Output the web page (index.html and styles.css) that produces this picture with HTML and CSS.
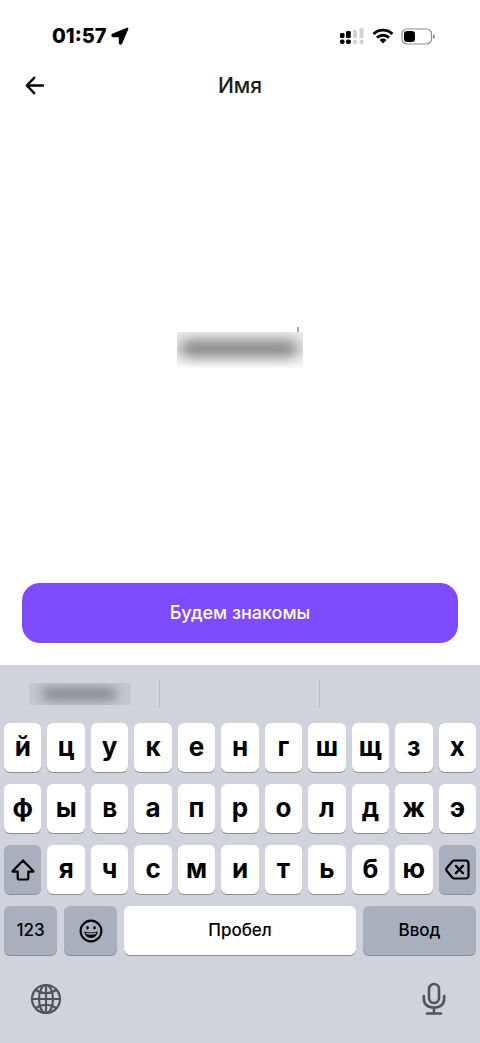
FILE: index.html
```html
<!DOCTYPE html>
<html lang="ru">
<head>
<meta charset="utf-8">
<meta name="viewport" content="width=device-width, initial-scale=1">
<title>Имя</title>
<link rel="stylesheet" href="styles.css">
</head>
<body>
<div class="screen">
  <div class="status">
    <div class="clock"><span>01:57</span>
      <svg width="18" height="18" viewBox="0 0 17 17" aria-hidden="true"><path d="M15.500 1.500 L1.500 7.300 Q.8 8.500 2 8.700 H7.300 Q8.300 8.700 8.300 9.700 V15 Q8.700 16.500 9.700 15.300 Z" fill="#000" stroke="#000" stroke-width="1.900" stroke-linejoin="round"/></svg>
    </div>
    <div class="indicators">
      <svg width="26" height="18" viewBox="0 0 26 18" aria-hidden="true">
        <g fill="#000"><rect x="1" y="6" width="4.500" height="5" rx="1.300"/><rect x="7" y="4" width="4.800" height="7" rx="1.300"/><rect x="1" y="12.500" width="4.500" height="4.500" rx="1.800"/><rect x="7" y="12.500" width="4.800" height="4.500" rx="1.800"/></g>
        <g fill="#d0d0d0"><rect x="14" y="3" width="4" height="8" rx="1.300"/><rect x="20.500" y="1" width="4" height="10" rx="1.300"/><rect x="14" y="12.500" width="4" height="4.500" rx="1.800"/><rect x="20.500" y="12.500" width="4" height="4.500" rx="1.800"/></g>
      </svg>
      <svg width="22" height="16" viewBox="0 0 22 16" aria-hidden="true"><g fill="none" stroke="#000" stroke-width="2.900"><path d="M1.500 6 A13.500 13.500 0 0 1 20.500 6"/><path d="M5 9.700 A8.500 8.500 0 0 1 17 9.700"/></g><path d="M7.500 12 Q11 9.200 14.500 12 L11 15.500Z"/></svg>
      <svg width="35" height="17" viewBox="0 0 35 17" aria-hidden="true"><rect x="1" y="1" width="29.500" height="15" rx="5" fill="none" stroke="#8c8c8c" stroke-width="1.200"/><rect x="3" y="3" width="11" height="11" rx="3.200"/><path d="M32 6 Q34 7 34 8.500 T32 11Z" fill="#8c8c8c"/></svg>
    </div>
  </div>

  <header class="header">
    <button class="back" type="button" aria-label="Назад">
      <svg width="20" height="20" viewBox="0 0 20 20" aria-hidden="true"><path d="M18 9.500 H2 M9.200 1.800 L1.800 9.500 L9.200 17.200" fill="none" stroke="#000" stroke-width="2.400" stroke-linecap="round" stroke-linejoin="round"/></svg>
    </button>
    <h1 class="title">Имя</h1>
  </header>

  <main class="content">
    <div class="name-field">
      <input class="name-input" type="text" aria-label="Имя">
      <span class="caret"></span>
      <span class="smudge"></span>
    </div>
  </main>

  <button class="submit" type="button">Будем знакомы</button>

  <section class="keyboard" aria-label="Клавиатура">
    <div class="suggestions">
      <button class="suggestion" type="button" aria-label="Подсказка 1"><span class="smudge smudge-small"></span></button>
      <button class="suggestion" type="button" aria-label="Подсказка 2"></button>
      <button class="suggestion" type="button" aria-label="Подсказка 3"></button>
    </div>
    <div class="rows">
      <div class="row letters">
        <button class="key">й</button><button class="key">ц</button><button class="key">у</button><button class="key">к</button><button class="key">е</button><button class="key">н</button><button class="key">г</button><button class="key">ш</button><button class="key">щ</button><button class="key">з</button><button class="key">х</button>
      </div>
      <div class="row letters">
        <button class="key">ф</button><button class="key">ы</button><button class="key">в</button><button class="key">а</button><button class="key">п</button><button class="key">р</button><button class="key">о</button><button class="key">л</button><button class="key">д</button><button class="key">ж</button><button class="key">э</button>
      </div>
      <div class="row letters">
        <button class="key dark" aria-label="Shift"><svg width="24" height="22" viewBox="0 0 24 22" aria-hidden="true"><path d="M12 1.500 L22.300 12 Q22.500 12.700 21.800 12.700 H17.300 V19 Q17.300 20.500 15.800 20.500 H8.200 Q6.700 20.500 6.700 19 V12.700 H2.200 Q1.500 12.700 1.700 12 Z" fill="none" stroke="#000" stroke-width="2.200" stroke-linejoin="round"/></svg></button><button class="key">я</button><button class="key">ч</button><button class="key">с</button><button class="key">м</button><button class="key">и</button><button class="key">т</button><button class="key">ь</button><button class="key">б</button><button class="key">ю</button><button class="key dark" aria-label="Удалить"><svg width="25" height="21" viewBox="0 0 25 21" aria-hidden="true"><g fill="none" stroke="#000" stroke-width="2.200" stroke-linecap="round" stroke-linejoin="round"><path d="M9.500 1.500 H20.500 Q23.500 1.500 23.500 4.500 V16.500 Q23.500 19.500 20.500 19.500 H9.500 Q8.300 19.500 7.300 18.500 L1.800 12 Q.8 10.500 1.800 9 L7.300 2.500 Q8.300 1.500 9.500 1.500Z"/><path d="M10.800 6.800 L18 14.200 M18 6.800 L10.800 14.200"/></g></svg></button>
      </div>
      <div class="row bottom">
        <button class="key dark word">123</button>
        <button class="key dark" aria-label="Эмодзи"><svg width="24" height="24" viewBox="0 0 24 24" aria-hidden="true"><circle cx="12" cy="12" r="10.400" fill="none" stroke="#000" stroke-width="2.100"/><ellipse cx="8.500" cy="8.700" rx="1.300" ry="1.700"/><ellipse cx="15.500" cy="8.700" rx="1.300" ry="1.700"/><path d="M5.300 12.500 Q12 14.500 18.700 12.500 Q18 19 12 19 T5.300 12.500Z"/><path d="M7 14.300 Q12 15.700 17 14.300" fill="none" stroke="#a8b0bd" stroke-width="1.300"/></svg></button>
        <button class="key word">Пробел</button>
        <button class="key dark word">Ввод</button>
      </div>
    </div>
    <div class="tools">
      <button class="tool" type="button" aria-label="Сменить язык"><svg width="32" height="32" viewBox="0 0 32 32" aria-hidden="true"><g fill="none" stroke="#50555c" stroke-width="2.200"><circle cx="16" cy="16" r="14"/><ellipse cx="16" cy="16" rx="7" ry="14"/><path d="M16 2 V30 M2 16 H30 M5.500 7 Q16 13.500 26.500 7 M5.500 25 Q16 18.500 26.500 25"/></g></svg></button>
      <button class="tool" type="button" aria-label="Диктовка"><svg width="24" height="34" viewBox="0 0 24 34" aria-hidden="true"><g fill="none" stroke="#50555c" stroke-width="2.600" stroke-linecap="round"><rect x="7" y="2" width="10" height="19" rx="5"/><path d="M1.800 14 V16 Q1.800 25.500 12 25.500 T22.200 16 V14 M12 25.500 V31.500 M5 31.500 H19"/></g></svg></button>
    </div>
  </section>
</div>
</body>
</html>
```

FILE: styles.css
```css
* { box-sizing: border-box; }

body {
  margin: 0;
  background: #fff;
  color: #000;
  font-family: Inter, "Liberation Sans", sans-serif;
}

button {
  margin: 0;
  padding: 0;
  border: 0;
  background: none;
  color: inherit;
  font: inherit;
}

svg { display: block; flex: none; }

.screen {
  display: flex;
  flex-direction: column;
  min-height: 100vh;
}

.status {
  display: flex;
  justify-content: space-between;
  align-items: center;
  padding: 24px 44px 0 52px;
}

.clock {
  display: flex;
  align-items: center;
  gap: 4px;
  font-size: 20px;
  line-height: 24px;
  font-weight: 800;
}

.indicators {
  display: flex;
  align-items: center;
  gap: 7px;
}

.header {
  display: grid;
  grid-template-columns: 20px 1fr 20px;
  align-items: center;
  padding: 24px 25px;
}

.title {
  margin: 0;
  text-align: center;
  font-size: 21px;
  line-height: 28px;
  font-weight: 500;
  color: #1c1c1e;
}

.content {
  flex: 1;
  display: flex;
  align-items: center;
  justify-content: center;
  padding-bottom: 8px;
}

.name-field {
  position: relative;
  width: 126px;
  height: 36px;
}

.name-input {
  width: 100%;
  height: 100%;
  padding: 0;
  border: 0;
  outline: 0;
  background: transparent;
  font: inherit;
  text-align: center;
}

.caret {
  position: absolute;
  top: -5px;
  right: 4px;
  width: 2px;
  height: 6px;
  background: #aaa;
}

.smudge {
  position: absolute;
  inset: 0;
  overflow: hidden;
  background: linear-gradient(#ededed, #dedede 50%, #fcfcfc);
}

.smudge::before {
  content: "";
  position: absolute;
  inset: 9px 6px 12px 4px;
  border-radius: 8px;
  background: #7c7c7f;
  filter: blur(7px);
}

.submit {
  margin: 0 22px 22px;
  padding: 16px;
  border-radius: 18px;
  background: #7f4bff;
  color: #fff;
  font-size: 18px;
  line-height: 28px;
  font-weight: 500;
}

.keyboard {
  background: #d0d3dc;
}

.suggestions {
  display: grid;
  grid-template-columns: repeat(3, 1fr);
  padding: 15px 0;
}

.suggestion {
  display: flex;
  align-items: center;
  justify-content: center;
  height: 28px;
}

.suggestion:not(:last-child) { border-right: 1px solid #b8bbc4; }

.smudge-small {
  position: relative;
  inset: auto;
  width: 102px;
  height: 22px;
  background: #c5c8cf;
}

.smudge-small::before {
  inset: 5px 14px 5px 12px;
  background: #808289;
  filter: blur(6px);
}

.rows {
  display: grid;
  gap: 12px;
  padding: 0 4px;
}

.row { display: grid; }

.letters {
  grid-template-columns: repeat(11, 1fr);
  gap: 6px;
}

.bottom {
  grid-template-columns: 53fr 53fr 232fr 113fr;
  gap: 7px;
}

.key {
  display: flex;
  align-items: center;
  justify-content: center;
  min-width: 0;
  height: 49px;
  padding-bottom: 2px;
  border-radius: 6px;
  background: #fff;
  box-shadow: 0 1px 0 #8b8e94;
  font-size: 26px;
  line-height: 32px;
  font-weight: 700;
}

.dark {
  padding-bottom: 0;
  background: #a8b0bd;
}

.word {
  padding-bottom: 2px;
  font-size: 17px;
  line-height: 24px;
  font-weight: 500;
}

.tools {
  display: flex;
  align-items: center;
  justify-content: space-between;
  padding: 27px 34px 27px 30px;
}
```
